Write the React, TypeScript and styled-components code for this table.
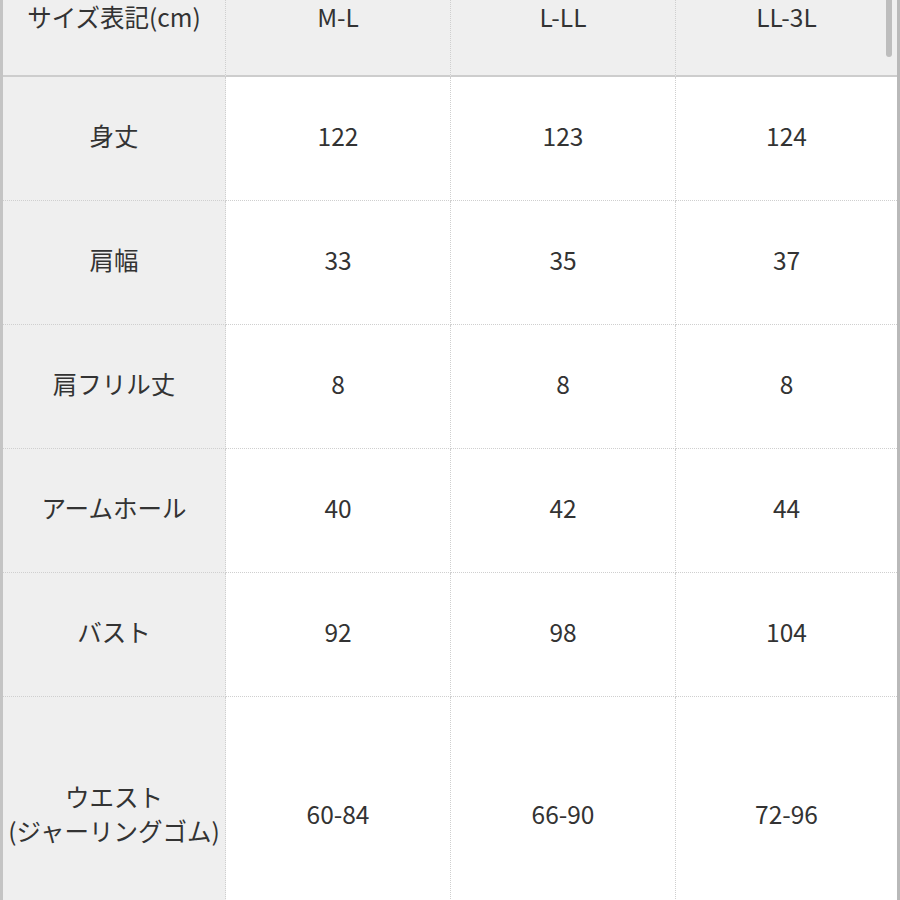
import React, { FC } from "react";
import styled, { createGlobalStyle } from "styled-components";

const GlobalStyle = createGlobalStyle`
  html, body {
    margin: 0;
    padding: 0;
    background: #ffffff;
  }
`;

const Frame = styled.div`
  position: relative;
  width: 900px;
  height: 900px;
  box-sizing: border-box;
  overflow: hidden;
  border-left: 3px solid #c4c4c4;
  border-right: 3px solid #b9b9b9;
  background: #ffffff;
  font-family: "Noto Sans CJK JP", "Noto Sans", sans-serif;
  color: #333333;
`;

const Grid = styled.div`
  display: grid;
  grid-template-columns: 223px 225px 225px 1fr;
  grid-template-rows: 77px repeat(5, 124px) 240px;
`;

const Cell = styled.div<{ $head?: boolean; $label?: boolean; $last?: boolean }>`
  box-sizing: border-box;
  display: flex;
  flex-direction: column;
  align-items: center;
  justify-content: ${(p) => (p.$head ? "flex-start" : "center")};
  padding-bottom: ${(p) => (p.$head ? "0" : "5px")};
  background: ${(p) => (p.$head || p.$label ? "#efefef" : "#ffffff")};
  border-right: ${(p) => (p.$last ? "none" : "1px dotted #cfcfcf")};
  border-bottom: ${(p) =>
    p.$head ? "2px solid #cdcdcd" : "1px dotted #cfcfcf"};
  font-size: 24.5px;
  line-height: 34px;
  white-space: nowrap;
`;

const Thumb = styled.div`
  position: absolute;
  top: 0;
  right: 5px;
  width: 6px;
  height: 57px;
  border-radius: 0 0 3px 3px;
  background: #bdbdbd;
`;

const sizes = ["M-L", "L-LL", "LL-3L"];

const rows: { label: string[]; values: string[] }[] = [
  { label: ["身丈"], values: ["122", "123", "124"] },
  { label: ["肩幅"], values: ["33", "35", "37"] },
  { label: ["肩フリル丈"], values: ["8", "8", "8"] },
  { label: ["アームホール"], values: ["40", "42", "44"] },
  { label: ["バスト"], values: ["92", "98", "104"] },
  { label: ["ウエスト", "(ジャーリングゴム)"], values: ["60-84", "66-90", "72-96"] },
];

const App: FC = () => {
  return (
    <>
      <GlobalStyle />
      <Frame>
        <Grid>
          <Cell $head>サイズ表記(cm)</Cell>
          {sizes.map((s, i) => (
            <Cell key={s} $head $last={i === sizes.length - 1}>
              {s}
            </Cell>
          ))}
          {rows.map((r) => (
            <React.Fragment key={r.label.join("")}>
              <Cell $label>
                {r.label.map((l) => (
                  <span key={l}>{l}</span>
                ))}
              </Cell>
              {r.values.map((v, i) => (
                <Cell key={i} $last={i === r.values.length - 1}>
                  {v}
                </Cell>
              ))}
            </React.Fragment>
          ))}
        </Grid>
        <Thumb />
      </Frame>
    </>
  );
};

export default App;
